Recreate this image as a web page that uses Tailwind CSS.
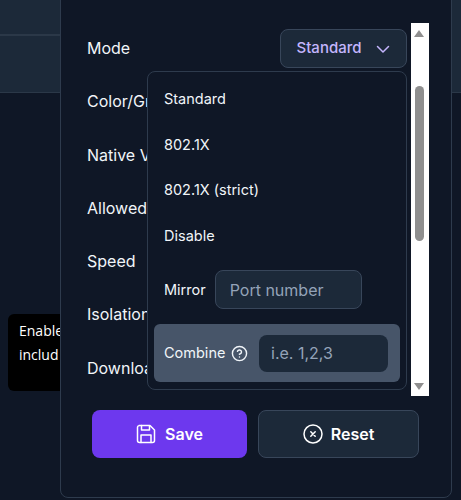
<!DOCTYPE html>
<html lang="en">
<head>
  <meta charset="UTF-8">
  <title>Port settings</title>
  <script src="https://cdn.jsdelivr.net/npm/@tailwindcss/browser@4"></script>
</head>
<body class="bg-[#0f1726] text-white">
  <div class="relative w-[461px] h-[500px] overflow-hidden font-['Inter',sans-serif]">
    <!-- table behind the modal -->
    <div class="h-[36px] bg-[#1c2939] border-b-2 border-[#2b3848]"></div>
    <div class="h-[57px] bg-[#1c2939] border-b border-[#2b3848]"></div>

    <!-- tooltip -->
    <div class="absolute left-[8px] top-[314px] w-[70px] h-[77px] rounded-md bg-black pl-[11px] pt-[5px] text-[14px] leading-[24px] text-white font-['Open_Sans',sans-serif]">
      <div>Enable</div>
      <div>includ</div>
    </div>

    <!-- modal -->
    <div class="absolute left-[60px] top-[-20px] w-[392px] h-[518px] rounded-lg border border-[#2e3b4d] bg-[#0f1726]">
      <div class="absolute left-[26px] top-[56px] flex flex-col gap-[31.3px] text-[16px] leading-[22px] text-[#f1f5f9] w-[60px] whitespace-nowrap overflow-hidden">
        <div>Mode</div>
        <div>Color/Group</div>
        <div>Native VLAN</div>
        <div>Allowed VLANs</div>
        <div>Speed</div>
        <div>Isolation</div>
        <div>Download</div>
      </div>

      <button class="absolute left-[219px] top-[48px] w-[127px] h-[39px] flex items-center justify-center gap-[13px] rounded-lg border border-[#38465a] bg-[#1c2939] text-[15px] font-medium text-[#c4b5fd]">
        Standard
        <svg class="w-[16px] h-[16px]" viewBox="0 0 16 16" fill="none" stroke="currentColor" stroke-width="1.5" stroke-linecap="round" stroke-linejoin="round"><path d="M2.5 5.5 8 11l5.5-5.5"/></svg>
      </button>

      <!-- dropdown -->
      <div class="absolute left-[86px] top-[90px] w-[260px] h-[319px] rounded-lg border border-[#2e3b4d] bg-[#0f1726] text-[14.5px] text-[#f1f5f9]">
        <div class="flex flex-col pl-[16px] pt-[17px] gap-[25.7px] leading-[20px]">
          <div>Standard</div>
          <div>802.1X</div>
          <div>802.1X (strict)</div>
          <div>Disable</div>
        </div>
        <div class="flex items-center gap-[9px] pl-[16px] mt-[24px]">
          <span>Mirror</span>
          <input class="w-[147px] h-[39px] px-[14px] rounded-lg border border-[#38465a] bg-[#1c2939] text-[16px] placeholder:text-[#94a3b8]" placeholder="Port number">
        </div>
        <div class="flex items-center mx-[6px] mt-[15px] h-[58px] rounded-md bg-[#475569] pl-[10px] pr-[12px]">
          <span>Combine</span>
          <svg class="w-[17px] h-[17px] ml-[6px]" viewBox="0 0 24 24" fill="none" stroke="currentColor" stroke-width="2" stroke-linecap="round" stroke-linejoin="round"><circle cx="12" cy="12" r="10"/><path d="M9.1 9a3 3 0 0 1 5.8 1c0 2-3 3-3 3"/><path d="M12 17h.01"/></svg>
          <input class="ml-auto w-[129px] h-[37px] px-[12px] rounded-lg bg-[#1c2939] text-[16px] placeholder:text-[#94a3b8]" placeholder="i.e. 1,2,3">
        </div>
      </div>

      <!-- scrollbar -->
      <div class="absolute left-[350px] top-[42px] w-[18px] h-[373px] bg-white">
        <div class="absolute left-[3px] top-[7px] w-0 h-0 border-x-[5.5px] border-x-transparent border-b-[7px] border-b-[#8f8f8f]"></div>
        <div class="absolute left-[4px] top-[63px] w-[9px] h-[155px] rounded-full bg-[#8f8f8f]"></div>
        <div class="absolute left-[3px] bottom-[6px] w-0 h-0 border-x-[5.5px] border-x-transparent border-t-[7px] border-t-[#8f8f8f]"></div>
      </div>

      <!-- footer -->
      <div class="absolute left-[31px] top-[429px] flex gap-[11px] text-[16px] font-semibold">
        <button class="w-[155px] h-[48px] flex items-center justify-center gap-[9px] rounded-lg bg-[#6d38ee]">
          <svg class="w-[20px] h-[20px]" viewBox="0 0 20 20" fill="none" stroke="currentColor" stroke-width="1.5" stroke-linecap="round" stroke-linejoin="round"><path d="M3 1.5h11l4.5 4.5v10.5a2 2 0 0 1-2 2h-13a2 2 0 0 1-2-2v-13a2 2 0 0 1 2-2Z"/><path d="M5.5 1.5v4.5h8V2"/><path d="M5 18.5v-7.5h10v7.5"/></svg>
          Save
        </button>
        <button class="w-[161px] h-[48px] flex items-center justify-center gap-[8px] rounded-lg border border-[#38465a] bg-[#1c2939]">
          <svg class="w-[20px] h-[20px]" viewBox="0 0 20 20" fill="none" stroke="currentColor" stroke-width="1.5" stroke-linecap="round"><circle cx="10" cy="10" r="9"/><path d="M7.8 7.8l4.4 4.4M12.2 7.8l-4.4 4.4"/></svg>
          Reset
        </button>
      </div>
    </div>

    <!-- side band right of the modal -->
    <div class="absolute left-[452px] top-0 w-[9px] h-[93px] bg-[#1c2939] border-b border-[#2b3848]"></div>
  </div>
</body>
</html>
